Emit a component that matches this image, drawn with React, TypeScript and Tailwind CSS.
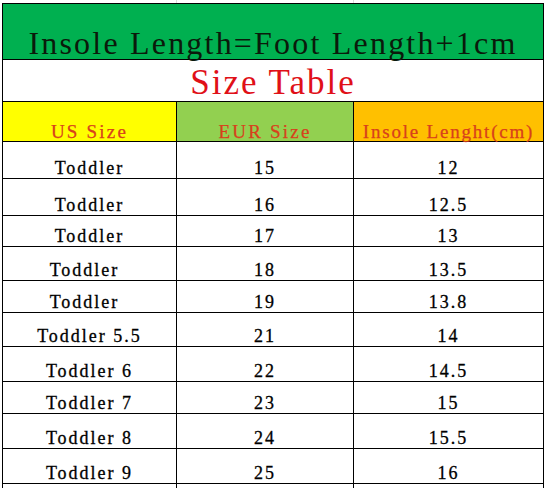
const rows = [
  { us: "Toddler", eur: "15", insole: "12", h: "h-[37px]", shift: false },
  { us: "Toddler", eur: "16", insole: "12.5", h: "h-[37px]", shift: false },
  { us: "Toddler", eur: "17", insole: "13", h: "h-[31px]", shift: false },
  { us: "Toddler", eur: "18", insole: "13.5", h: "h-[34px]", shift: true },
  { us: "Toddler", eur: "19", insole: "13.8", h: "h-[32px]", shift: true },
  { us: "Toddler 5.5", eur: "21", insole: "14", h: "h-[34px]", shift: false },
  { us: "Toddler 6", eur: "22", insole: "14.5", h: "h-[35px]", shift: false },
  { us: "Toddler 7", eur: "23", insole: "15", h: "h-[32px]", shift: false },
  { us: "Toddler 8", eur: "24", insole: "15.5", h: "h-[35px]", shift: false },
  { us: "Toddler 9", eur: "25", insole: "16", h: "h-[35px]", shift: false },
];

const cell =
  "flex items-end justify-center border-r border-black pb-[1px] text-[18px] leading-none tracking-[2px] text-black [-webkit-text-stroke:0.3px_black]";

const head = "flex items-end justify-center border-r border-black [-webkit-text-stroke:0.25px_#d8401c]";

export default function App() {
  return (
    <div className="h-[488px] w-[547px] overflow-hidden bg-white font-['Liberation_Serif',serif]">
      {/* sheet gridlines above the table */}
      <div className="ml-[2px] grid h-[3px] w-[542px] grid-cols-[175px_177px_190px]">
        <div className="border-r border-[#dcdcdc]" />
        <div className="border-r border-[#dcdcdc]" />
        <div />
      </div>

      <div className="ml-[2px] w-[542px] border-l border-t border-black">
        <div className="flex h-[56px] items-end justify-center border-b border-r border-black bg-[#00b050] text-[32px] leading-none tracking-[2.2px] text-[#0b1a0b]">
          Insole Length=Foot Length+1cm
        </div>
        <div className="flex h-[42px] items-end justify-center border-b border-r border-black pb-[1px] text-[35px] leading-none tracking-[2px] text-[#e01018]">
          Size Table
        </div>
        <div className="grid h-[40px] grid-cols-[174px_177px_190px] border-b border-black text-[19px] leading-none tracking-[2.2px] text-[#d8401c]">
          <div className={`${head} bg-[#ffff00]`}>US Size</div>
          <div className={`${head} bg-[#92d050]`}>EUR Size</div>
          <div className={`${head} bg-[#ffc000] tracking-[1.8px]`}>Insole Lenght(cm)</div>
        </div>

        {rows.map((r, i) => (
          <div key={i} className={`grid grid-cols-[174px_177px_190px] border-b border-black ${r.h}`}>
            <div className={`${cell} ${r.shift ? "pr-[10px]" : ""}`}>{r.us}</div>
            <div className={cell}>{r.eur}</div>
            <div className={cell}>{r.insole}</div>
          </div>
        ))}

        <div className="grid h-[35px] grid-cols-[174px_177px_190px]">
          <div className="border-r border-black" />
          <div className="border-r border-black" />
          <div className="border-r border-black" />
        </div>
      </div>
    </div>
  );
}
